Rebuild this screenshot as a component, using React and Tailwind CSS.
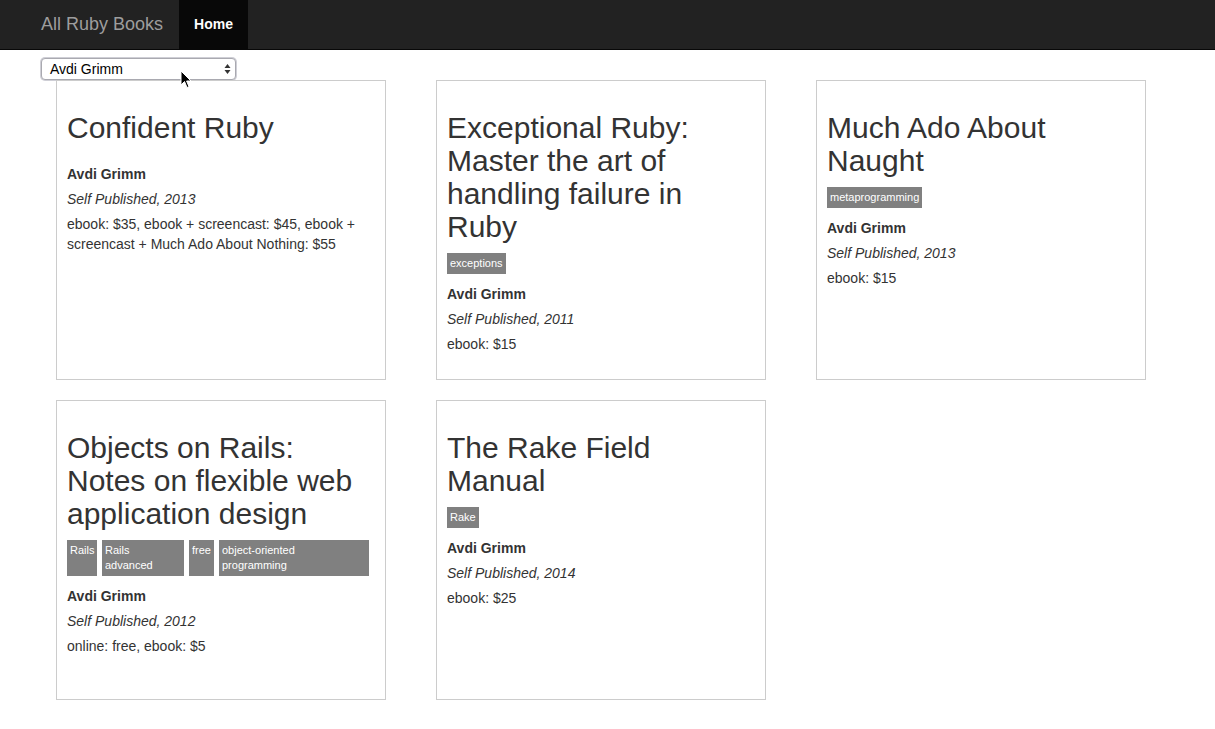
import React from "react";

const books = [
  {
    title: "Confident Ruby",
    tags: [],
    year: 2013,
    price: "ebook: $35, ebook + screencast: $45, ebook + screencast + Much Ado About Nothing: $55",
  },
  {
    title: "Exceptional Ruby: Master the art of handling failure in Ruby",
    tags: [{ name: "exceptions" }],
    year: 2011,
    price: "ebook: $15",
  },
  {
    title: "Much Ado About Naught",
    tags: [{ name: "metaprogramming" }],
    year: 2013,
    price: "ebook: $15",
  },
  {
    title: "Objects on Rails: Notes on flexible web application design",
    tags: [
      { name: "Rails", w: "w-[30px]" },
      { name: "Rails\nadvanced", w: "w-[82px]" },
      { name: "free", w: "w-[25px]" },
      { name: "object-oriented\nprogramming", w: "w-[150px]" },
    ],
    year: 2012,
    price: "online: free, ebook: $5",
  },
  {
    title: "The Rake Field Manual",
    tags: [{ name: "Rake" }],
    year: 2014,
    price: "ebook: $25",
  },
];

function BookCard({ book }) {
  return (
    <div className="h-[300px] border border-[#cccccc] px-[10px] pt-[30px] flex flex-col">
      <h2 className="text-[30px] leading-[33px] text-[#333333] mb-[10px]">{book.title}</h2>
      <div className="flex gap-[5px] mb-[10px]">
        {book.tags.map((t) => (
          <span
            key={t.name}
            className={`${t.w || ""} shrink-0 whitespace-pre-line bg-[#808080] text-white text-[11px] leading-[15px] p-[3px]`}
          >
            {t.name}
          </span>
        ))}
      </div>
      <div className="text-[14px] leading-[20px] text-[#333333]">
        <p className="font-bold mb-[5px]">Avdi Grimm</p>
        <p className="italic mb-[5px]">Self Published, {book.year}</p>
        <p>{book.price}</p>
      </div>
    </div>
  );
}

export default function App() {
  return (
    <div className="min-h-screen bg-white" style={{ fontFamily: '"Liberation Sans", Arial, sans-serif' }}>
      {/* Navbar */}
      <div className="h-[50px] bg-[#222222] border-b border-[#080808] flex items-stretch pl-[41px]">
        <div className="text-[18px] text-[#9d9d9d] flex items-center pr-[16px]">All Ruby Books</div>
        <div className="bg-[#080808] text-white text-[14px] font-bold flex items-center px-[15px]">Home</div>
      </div>

      <div className="pl-[41px] pt-[8px] relative">
        {/* Author select */}
        <div className="w-[195px] h-[22px] rounded-[4px] border border-[#a9a9b0] shadow-[0_0_0_1px_#cfcfd6] bg-white flex items-center justify-between pl-[8px] pr-[4px] text-[14px] text-black">
          <span>Avdi Grimm</span>
          <svg width="7" height="12" viewBox="0 0 7 12">
            <path d="M3.5 1 L6.5 5 L0.5 5 Z" fill="#333" />
            <path d="M3.5 11 L6.5 7 L0.5 7 Z" fill="#333" />
          </svg>
        </div>

        {/* Mouse cursor */}
        <svg className="absolute left-[180px] top-[20px] z-10" width="12" height="19" viewBox="0 0 12 19">
          <path d="M1 1 L1 15 L4.5 11.5 L7 17.5 L9 16.7 L6.6 11 L11 11 Z" fill="#000" stroke="#fff" strokeWidth="1" />
        </svg>

        {/* Books grid */}
        <div className="ml-[15px] grid grid-cols-[330px_330px_330px] gap-x-[50px] gap-y-[20px]">
          {books.map((b) => (
            <BookCard key={b.title} book={b} />
          ))}
        </div>
      </div>
    </div>
  );
}
